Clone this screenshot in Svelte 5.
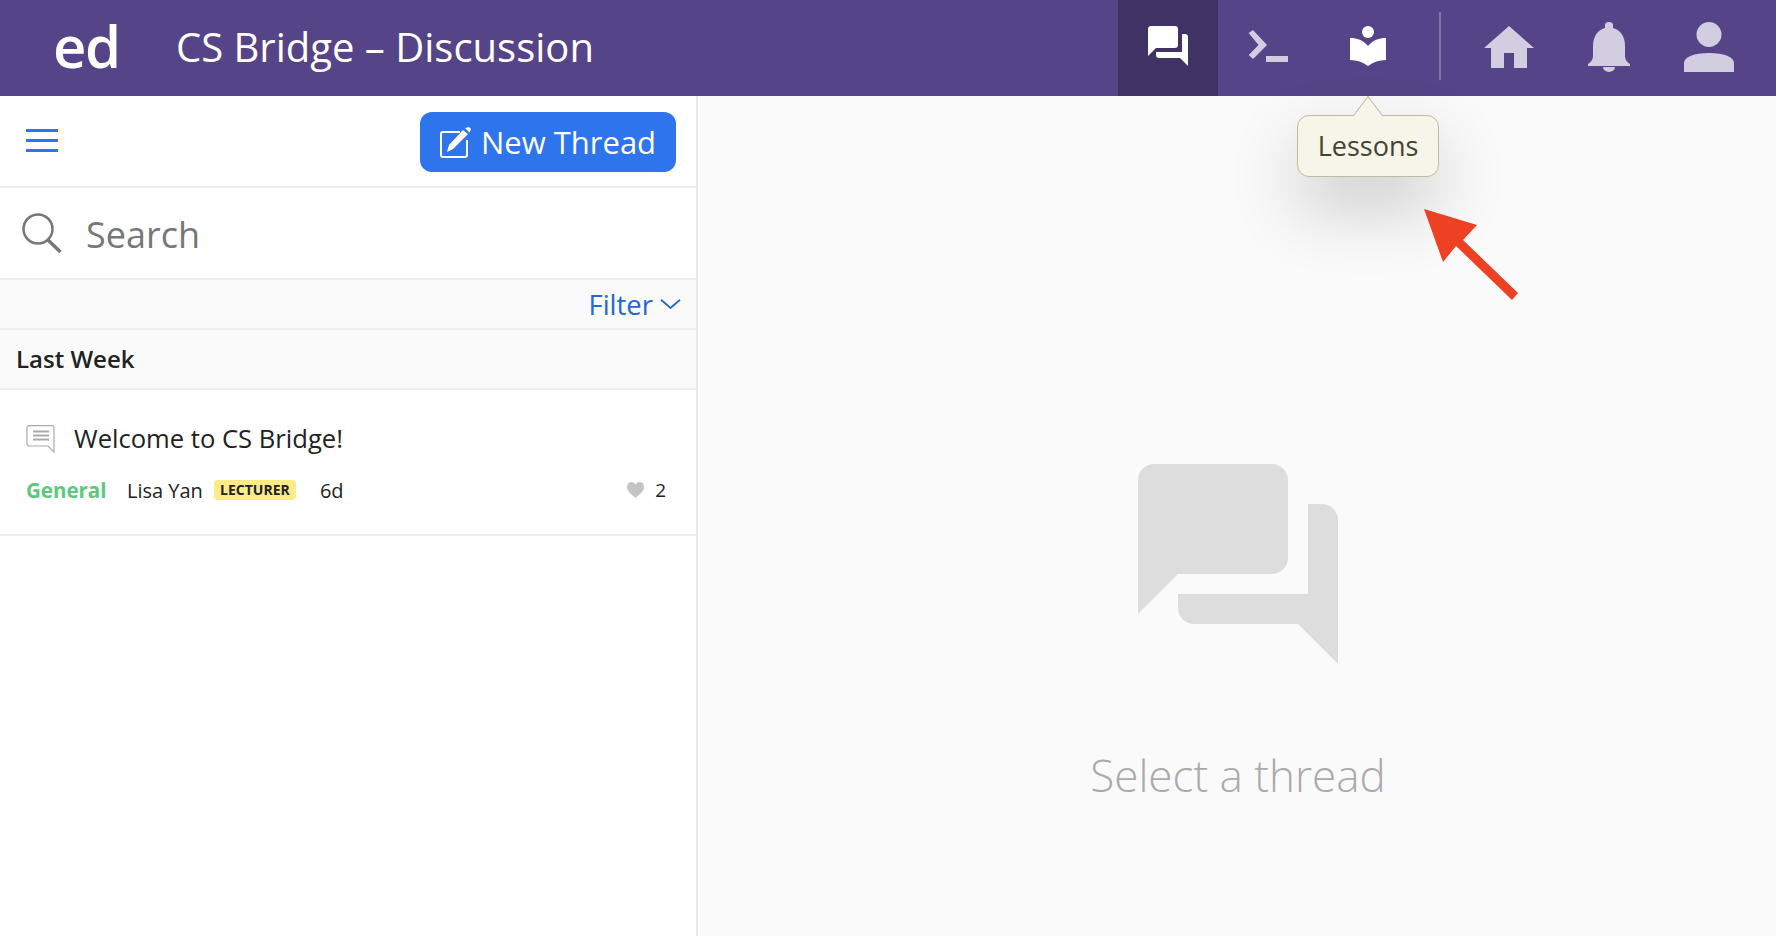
<script lang="ts">
  const chatTop = "M16 0H134a16 16 0 0 1 16 16V94a16 16 0 0 1-16 16H40L0 150V16A16 16 0 0 1 16 0Z";
  const chatBottom = "M170 40H184a16 16 0 0 1 16 16V200L160 160H56a16 16 0 0 1-16-16V130H170Z";
</script>

<div class="page">
  <header class="topbar">
    <span class="logo">ed</span>
    <span class="course">CS Bridge – Discussion</span>
    <nav class="tabs">
      <div class="tab active">
        <svg width="40" height="40" viewBox="0 0 200 200" fill="#fff">
          <path d={chatTop} /><path d={chatBottom} />
        </svg>
      </div>
      <div class="tab">
        <svg width="40" height="32" viewBox="0 0 40 32" fill="#d2cde0">
          <path d="M.7 3 5 0l14 15L5 29 .7 25l9.800-10z" />
          <rect x="18" y="26" width="22" height="6" />
        </svg>
      </div>
      <div class="tab">
        <svg width="36" height="40" viewBox="0 0 36 40" fill="#fff">
          <circle cx="18" cy="6" r="6" />
          <path d="M0 12C7 12 13 14 18 20C23 14 29 12 36 12V34C29 34 23 36 18 40C13 36 7 34 0 34Z" />
        </svg>
      </div>
      <div class="divider"></div>
      <div class="tab right">
        <svg width="50" height="43" viewBox="0 0 50 43" fill="#d2cde0">
          <path d="M25 0 50 22H43V42H30V27H20V42H7V22H0Z" />
        </svg>
      </div>
      <div class="tab right">
        <svg width="42" height="50" viewBox="0 0 42 50" fill="#d2cde0">
          <path d="M17 3a4 3 0 0 1 8 0V6C33 8 37 15 37 24V33C37 37 38 39 42 42V44H0V42C4 39 5 37 5 33V24C5 15 9 8 17 6Z" />
          <path d="M15 45H27a6 5 0 0 1-12 0Z" />
        </svg>
      </div>
      <div class="tab right">
        <svg width="50" height="50" viewBox="0 0 50 50" fill="#d2cde0">
          <circle cx="25" cy="12.500" r="12.500" />
          <path d="M0 50V41C0 35 10 31 25 31S50 35 50 41V50Z" />
        </svg>
      </div>
    </nav>
  </header>

  <div class="body">
    <aside class="sidebar">
      <div class="toolbar">
        <div class="burger"><i></i><i></i><i></i></div>
        <button class="new-thread">
          <svg width="31" height="31" viewBox="0 0 31 31" fill="none">
            <path d="M20 5H3a2 2 0 0 0-2 2V28a2 2 0 0 0 2 2H25a2 2 0 0 0 2-2V13" stroke="#fff" stroke-width="2" />
            <path d="M7 25 9 18 23 3 28 7 13 22Z M25 1 29 0 31 2 29.500 5.500Z" fill="#fff" />
          </svg>
          New Thread
        </button>
      </div>

      <div class="search">
        <svg width="40" height="40" viewBox="0 0 40 40" fill="none" stroke="#777">
          <circle cx="16" cy="16" r="14.500" stroke-width="2.500" />
          <path d="M26 27 38.500 39" stroke-width="3.500" />
        </svg>
        <span>Search</span>
      </div>

      <div class="filter">
        <span>Filter</span>
        <svg width="21" height="10" viewBox="0 0 21 10" fill="none" stroke="#2566d9" stroke-width="1.800">
          <path d="M1 .7 10.500 9 20 .7" />
        </svg>
      </div>

      <div class="group">Last Week</div>

      <div class="thread">
        <div class="thread-title">
          <svg width="29" height="28" viewBox="0 0 29 28" fill="none" stroke="#aaa" stroke-width="1.200">
            <path d="M3 .6H26a2 2 0 0 1 2 2V27L22 21H3a2 2 0 0 1-2-2V2.600A2 2 0 0 1 3 .6Z" />
            <path d="M7 6.500H23M7 10.500H23M7 14.500H23" stroke-width="1.800" />
          </svg>
          <span>Welcome to CS Bridge!</span>
        </div>
        <div class="thread-meta">
          <span class="category">General</span>
          <span class="author">Lisa Yan</span>
          <span class="badge">LECTURER</span>
          <span class="age">6d</span>
          <span class="likes">
            <svg width="17" height="16" viewBox="0 0 17 16" fill="#c4c4c4">
              <path d="M8.500 16C3 11.500 0 8.500 0 4.800 0 2 2 0 4.500 0 6.200 0 7.700 1 8.500 2.500 9.300 1 10.800 0 12.500 0 15 0 17 2 17 4.800 17 8.500 14 11.500 8.500 16Z" />
            </svg>
            2
          </span>
        </div>
      </div>
    </aside>

    <main class="empty">
      <svg width="200" height="200" viewBox="0 0 200 200" fill="#ddd">
        <path d={chatTop} /><path d={chatBottom} />
      </svg>
      <p>Select a thread</p>
    </main>
  </div>

  <div class="tooltip"><span>Lessons</span></div>

  <svg class="pointer" width="100" height="100" viewBox="0 0 100 100" fill="#ee4023">
    <path d="M0 0 53 16 39 31 94 84 88 91 32 37 19 53Z" />
  </svg>
</div>

<style>
:global(body) {
  margin: 0;
  font-family: "Open Sans", "Liberation Sans", sans-serif;
}

.page {
  position: relative;
  width: 1776px;
  height: 936px;
  overflow: hidden;
  display: flex;
  flex-direction: column;
  background: #fff;
}

.topbar {
  height: 96px;
  flex: none;
  display: flex;
  align-items: center;
  background: #554487;
  color: #fff;
}

.logo {
  margin-left: 53px;
  width: 123px;
  margin-top: -6px;
  font-size: 58px;
  font-weight: 600;
  letter-spacing: -1.500px;
}

.course {
  margin-top: -4px;
  font-size: 40px;
}

.tabs {
  margin-left: auto;
  margin-right: 17px;
  height: 100%;
  display: flex;
  align-items: center;
}

.tab {
  width: 100px;
  height: 100%;
  box-sizing: border-box;
  padding-bottom: 4px;
  display: flex;
  align-items: center;
  justify-content: center;
}

.tab.right {
  padding-bottom: 2px;
}

.tab.active {
  background: #413266;
}

.divider {
  width: 2px;
  height: 68px;
  margin: 0 18px 4px 21px;
  background: #8074a6;
}

.body {
  flex: 1;
  display: flex;
  min-height: 0;
}

.sidebar {
  width: 696px;
  flex: none;
  border-right: 2px solid #e8e8e8;
}

.toolbar {
  height: 90px;
  display: flex;
  align-items: center;
  justify-content: space-between;
  padding: 0 20px 0 26px;
  border-bottom: 2px solid #eee;
}

.burger {
  width: 32px;
  display: grid;
  gap: 7px;
  margin-top: -2px;
}

.burger i {
  height: 3px;
  background: #2f74ee;
}

.new-thread {
  width: 256px;
  height: 60px;
  margin-top: 2px;
  display: flex;
  align-items: center;
  justify-content: center;
  gap: 10px;
  border: none;
  border-radius: 12px;
  padding: 0;
  background: #2d74ed;
  color: #fff;
  font: 500 31px "Open Sans", sans-serif;
}

.search {
  height: 90px;
  display: flex;
  align-items: center;
  gap: 24px;
  padding-left: 22px;
  border-bottom: 2px solid #eee;
  color: #777;
  font-size: 36px;
}

.search span {
  margin-top: 2px;
}

.filter {
  height: 48px;
  display: flex;
  align-items: center;
  justify-content: flex-end;
  gap: 7px;
  padding-right: 15px;
  background: #fafafa;
  border-bottom: 2px solid #eee;
  color: #2566d9;
  font-size: 27.500px;
  font-weight: 500;
}

.group {
  height: 56px;
  padding: 0 0 2px 16px;
  display: flex;
  align-items: center;
  background: #fafafa;
  border-bottom: 2px solid #eee;
  color: #222;
  font-size: 24px;
  font-weight: 600;
}

.thread {
  height: 144px;
  box-sizing: content-box;
  border-bottom: 2px solid #eee;
  padding: 0 30px 0 26px;
  color: #222;
}

.thread-title {
  display: flex;
  align-items: center;
  gap: 19px;
  padding-top: 31px;
  font-size: 25.600px;
}

.thread-meta {
  display: flex;
  align-items: center;
  margin-top: 20px;
  font-size: 20px;
}

.category {
  width: 101px;
  color: #5cc97c;
  font-size: 20.500px;
  font-weight: 700;
}

.badge {
  margin-left: 11px;
  width: 82px;
  height: 20px;
  line-height: 20px;
  text-align: center;
  border-radius: 4px;
  background: #fdeb86;
  font-size: 14px;
  font-weight: 700;
}

.age {
  margin-left: 24px;
}

.likes {
  margin-left: auto;
  display: flex;
  align-items: center;
  gap: 11px;
  font-size: 19px;
}

.empty {
  flex: 1;
  display: flex;
  flex-direction: column;
  align-items: center;
  padding: 368px 0 0 2px;
  background: #fafafa;
}

.empty p {
  margin: 79px 0 0;
  color: #aaa;
  font-size: 44px;
  font-weight: 300;
  line-height: 64px;
}

.tooltip {
  position: absolute;
  left: 1297px;
  top: 115px;
  width: 142px;
  height: 62px;
  box-sizing: border-box;
  display: flex;
  align-items: center;
  justify-content: center;
  border: 1px solid #bdbba0;
  border-radius: 12px;
  background: #f6f5e9;
  color: #44442f;
  font-size: 27px;
  box-shadow: 0 30px 70px rgba(0, 0, 0, 0.2);
}

.tooltip span {
  margin-top: -2px;
}

.tooltip::before {
  content: "";
  position: absolute;
  left: 58px;
  top: -13px;
  width: 24px;
  height: 24px;
  box-sizing: border-box;
  border: 1px solid #bdbba0;
  border-right: none;
  border-bottom: none;
  background: #f6f5e9;
  transform: rotate(45deg) skew(8deg, 8deg);
}

.pointer {
  position: absolute;
  left: 1424px;
  top: 209px;
}
</style>
